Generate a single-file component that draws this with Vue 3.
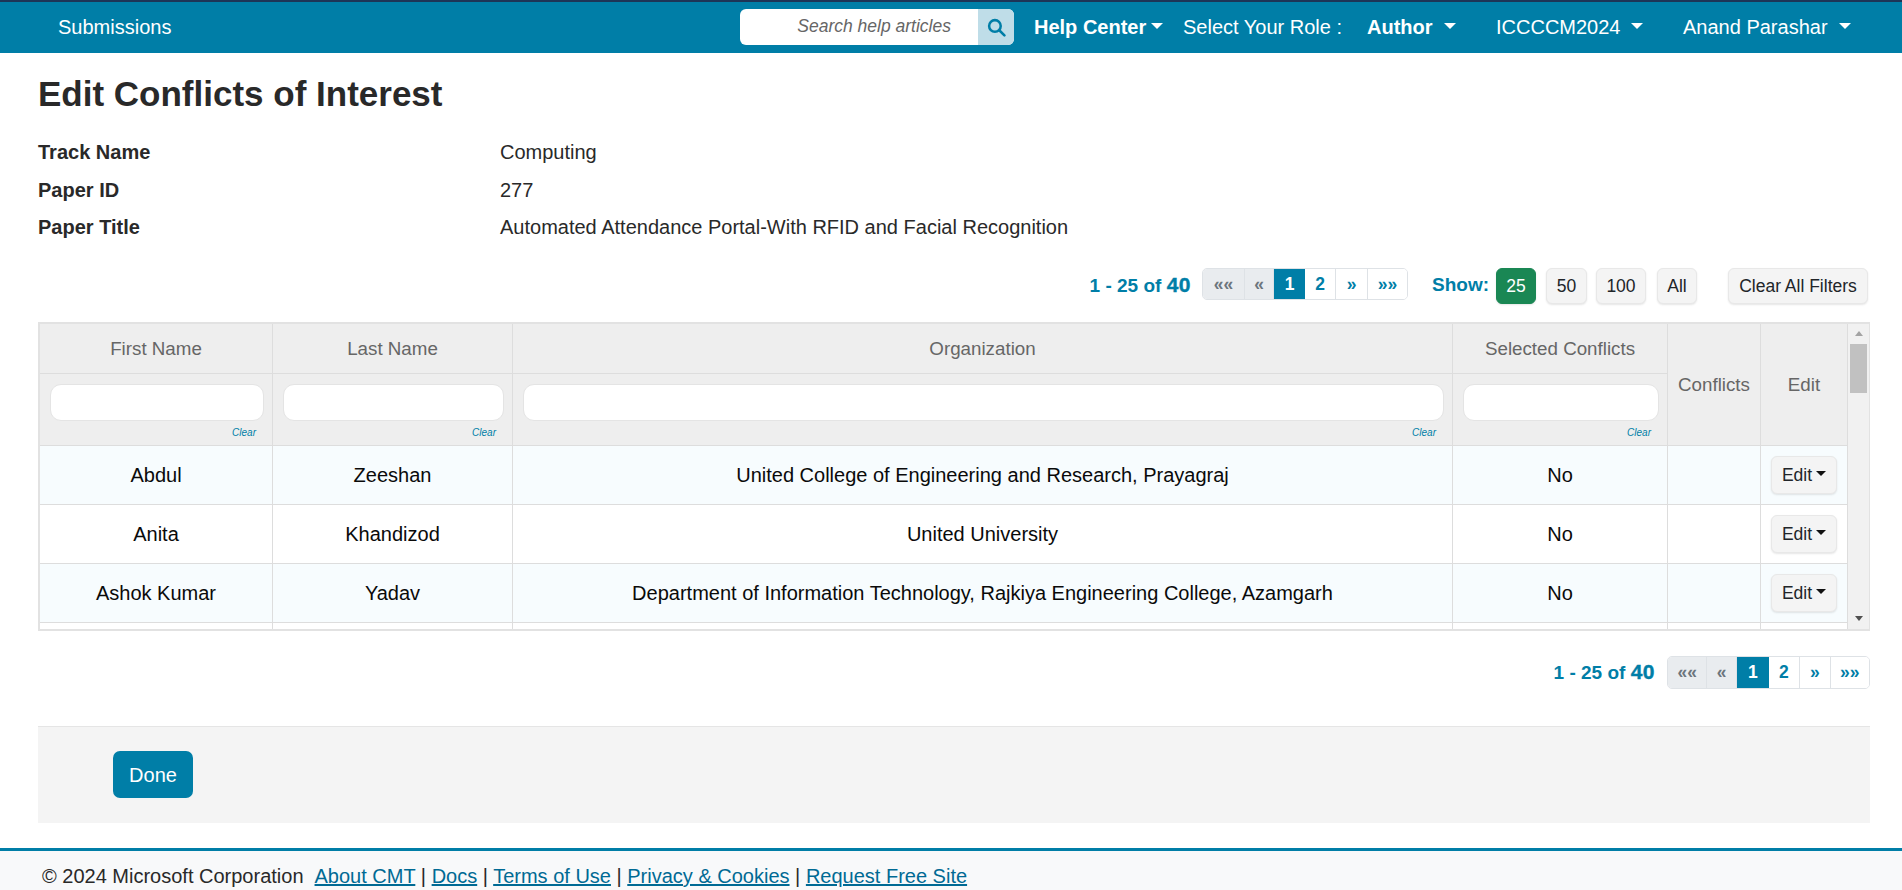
<script setup>
const rows = [
  { first: 'Abdul', last: 'Zeeshan', org: 'United College of Engineering and Research, Prayagraj', sel: 'No' },
  { first: 'Anita', last: 'Khandizod', org: 'United University', sel: 'No' },
  { first: 'Ashok Kumar', last: 'Yadav', org: 'Department of Information Technology, Rajkiya Engineering College, Azamgarh', sel: 'No' }
]
const pages = [
  { t: '««', c: 'off w1' }, { t: '«', c: 'off w2' }, { t: '1', c: 'cur w3' },
  { t: '2', c: 'w3' }, { t: '»', c: 'w4' }, { t: '»»', c: 'w5' }
]
const links = ['About CMT', 'Docs', 'Terms of Use', 'Privacy & Cookies', 'Request Free Site']
const info = [
  ['Track Name', 'Computing'],
  ['Paper ID', '277'],
  ['Paper Title', 'Automated Attendance Portal-With RFID and Facial Recognition']
]
</script>

<template>
  <div class="page">
    <header class="nav">
      <a class="nav-sub">Submissions</a>
      <div class="search">
        <span class="search-text">Search help articles</span>
        <span class="search-btn">
          <svg width="19" height="19" viewBox="0 0 18 18" fill="none" stroke="#007ea7" stroke-width="2.4">
            <circle cx="7.5" cy="7.5" r="5.5" />
            <path d="M11.6 11.6 L16.5 16.5" stroke-linecap="round" />
          </svg>
        </span>
      </div>
      <a class="nav-item bold help">Help Center<i class="caret"></i></a>
      <span class="nav-item role">Select Your Role :</span>
      <a class="nav-item bold author">Author<i class="caret wide"></i></a>
      <a class="nav-item conf">ICCCCM2024<i class="caret wide"></i></a>
      <a class="nav-item user">Anand Parashar<i class="caret wide"></i></a>
    </header>

    <main class="main">
      <h1 class="title">Edit Conflicts of Interest</h1>
      <dl class="info">
        <div v-for="i in info" :key="i[0]" class="info-row">
          <dt>{{ i[0] }}</dt>
          <dd>{{ i[1] }}</dd>
        </div>
      </dl>

      <div class="toolbar">
        <span class="count">1 - 25 of <b>40</b></span>
        <div class="pager">
          <span v-for="p in pages" :key="p.t" class="pg" :class="p.c">{{ p.t }}</span>
        </div>
        <span class="show">Show:</span>
        <button class="btn green">25</button>
        <button class="btn b50">50</button>
        <button class="btn b100">100</button>
        <button class="btn ball">All</button>
        <button class="btn clear">Clear All Filters</button>
      </div>

      <div class="grid">
        <div class="grid-body">
          <table>
            <colgroup>
              <col class="c1" /><col class="c2" /><col class="c3" /><col class="c4" /><col class="c5" /><col class="c6" />
            </colgroup>
            <thead>
              <tr class="head1">
                <th>First Name</th>
                <th>Last Name</th>
                <th>Organization</th>
                <th>Selected Conflicts</th>
                <th rowspan="2">Conflicts</th>
                <th rowspan="2">Edit</th>
              </tr>
              <tr class="head2">
                <th v-for="n in 4" :key="n" class="filter">
                  <input type="text" />
                  <a class="clr">Clear</a>
                </th>
              </tr>
            </thead>
            <tbody>
              <tr v-for="(r, i) in rows" :key="r.first" :class="{ tint: i % 2 === 0 }">
                <td>{{ r.first }}</td>
                <td>{{ r.last }}</td>
                <td>{{ r.org }}</td>
                <td>{{ r.sel }}</td>
                <td></td>
                <td><button class="btn edit">Edit<i class="caret dark"></i></button></td>
              </tr>
              <tr class="tail"><td></td><td></td><td></td><td></td><td></td><td></td></tr>
            </tbody>
          </table>
        </div>
        <div class="scroll">
          <i class="arrow up"></i>
          <div class="thumb"></div>
          <i class="arrow down"></i>
        </div>
      </div>

      <div class="bottom-pager">
        <span class="count">1 - 25 of <b>40</b></span>
        <div class="pager big">
          <span v-for="p in pages" :key="p.t" class="pg" :class="p.c">{{ p.t }}</span>
        </div>
      </div>

      <div class="actions">
        <button class="done">Done</button>
      </div>
    </main>

    <footer class="foot">
      <span class="copy">© 2024 Microsoft Corporation</span>
      <template v-for="(l, i) in links" :key="l">
        <span v-if="i" class="sep"> | </span><a class="flink">{{ l }}</a>
      </template>
    </footer>
  </div>
</template>

<style>
html, body { margin: 0; overflow: hidden; background: #fff; }
</style>

<style scoped>
.page {
  width: 1902px;
  height: 890px;
  overflow: hidden;
  display: flex;
  flex-direction: column;
  font-family: "Liberation Sans", Arial, sans-serif;
  font-size: 20px;
  color: #292929;
}
.nav {
  height: 51px;
  flex: none;
  display: flex;
  align-items: center;
  background: #007ea7;
  border-top: 2px solid #1d3557;
  color: #fff;
}
.nav-sub { margin-left: 58px; width: 682px; flex: none; margin-top: -1px; }
.search {
  flex: none;
  width: 274px;
  height: 36px;
  background: #fff;
  border-radius: 6px;
  display: flex;
  overflow: hidden;
  margin-top: -1px;
}
.search-text {
  flex: 1;
  font-style: italic;
  font-size: 17.5px;
  color: #666;
  line-height: 34px;
  text-align: right;
  padding-right: 27px;
}
.search-btn {
  width: 36px;
  background: #bfdde8;
  display: flex;
  align-items: center;
  justify-content: center;
}
.nav-item { flex: none; white-space: nowrap; display: flex; align-items: center; margin-top: -1px; }
.bold { font-weight: 700; }
.help { margin-left: 20px; width: 129px; }
.role { margin-left: 20px; width: 165px; }
.author { margin-left: 19px; width: 129px; }
.conf { width: 187px; }
.caret {
  display: inline-block;
  width: 0;
  height: 0;
  margin-left: 5px;
  border-left: 6px solid transparent;
  border-right: 6px solid transparent;
  border-top: 6px solid #fff;
  margin-top: -3px;
}
.caret.wide { margin-left: 11px; }
.caret.dark { border-top-color: #111; border-left-width: 5px; border-right-width: 5px; border-top-width: 5px; margin-left: 4px; margin-top: -3px; }

.main { padding: 0 32px 0 38px; flex: none; }
.title { margin: 20px 0 0; font-size: 35px; line-height: 42px; font-weight: 700; }
.info { margin: 19px 0 0; }
.info-row { display: flex; height: 37.5px; line-height: 37.5px; }
.info-row dt { width: 462px; font-weight: 700; }
.info-row dd { margin: 0; }

.toolbar { display: flex; align-items: flex-start; justify-content: flex-end; margin-top: 21.5px; height: 36px; padding-right: 2px; }
.count { color: #007ea7; font-weight: 700; font-size: 19px; line-height: 32px; white-space: nowrap; }
.toolbar .count { line-height: 34px; }
.count b { font-size: 21px; font-weight: 900; -webkit-text-stroke: 0.4px #007ea7; letter-spacing: 0.5px; }
.pager {
  display: flex;
  height: 32px;
  margin-left: 11px;
  border-radius: 5px;
  border: 1px solid #dee2e6;
  box-sizing: border-box;
  overflow: hidden;
  font-size: 17.5px;
}
.pg {
  box-sizing: border-box;
  display: flex;
  align-items: center;
  justify-content: center;
  color: #007ea7;
  background: #fff;
  border-right: 1px solid #dee2e6;
  font-weight: 700;
}
.toolbar .pg { padding-top: 1px; }
.pg:last-child { border-right: 0; }
.pg.off { background: #e9ecef; color: #6c757d; }
.pg.cur { background: #007ea7; color: #fff; border-right: 0; }
.w1 { width: 42px; } .w2 { width: 29px; } .w3 { width: 31px; } .w4 { width: 32px; } .w5 { width: 39px; }
.big.pager { margin-left: 12px; width: 203px; }
.big .w1 { width: 40px; } .big .w2 { width: 30px; } .big .w3 { width: 32px; } .big .w4 { width: 31px; } .big .w5 { width: 39px; }

.show { color: #007ea7; font-weight: 700; font-size: 19px; line-height: 33px; margin-left: 24px; }
.btn {
  font-family: inherit;
  font-size: 17.5px;
  height: 36px;
  box-sizing: border-box;
  border: 1px solid #e8e8e8;
  border-radius: 6px;
  background: #f4f4f4;
  color: #212529;
  box-shadow: 0 1px 2px rgba(0,0,0,.1);
  padding: 0;
  margin-left: 10px;
}
.green { background: #1a8754; border-color: #1a8754; color: #fff; width: 40px; margin-left: 7px; }
.b50 { width: 41px; }
.b100 { width: 50px; margin-left: 9px; }
.ball { width: 40px; margin-left: 11px; }
.clear { width: 140px; margin-left: 31px; }

.grid {
  margin-top: 18px;
  height: 309px;
  box-sizing: border-box;
  border: 2px solid #e2e2e2;
  border-right-width: 1px;
  display: flex;
}
.grid-body { width: 1808px; overflow: hidden; flex: none; }
table { border-collapse: separate; border-spacing: 0; table-layout: fixed; width: 1808px; }
.c1 { width: 233px; } .c2 { width: 240px; } .c3 { width: 940px; } .c4 { width: 215px; } .c5 { width: 93px; } .c6 { width: 87px; }
th {
  background: #eee;
  font-weight: 400;
  font-size: 18.75px;
  color: #666;
  border-right: 1px solid #ddd;
  border-bottom: 1px solid #ddd;
  padding: 0;
  vertical-align: middle;
}
.head1 th { height: 49px; box-sizing: content-box; }
.head2 th { height: 72px; }
.filter { text-align: right; padding: 10px 8px 0 10px; box-sizing: border-box; vertical-align: top; }
.filter input {
  display: block;
  width: 100%;
  height: 37px;
  box-sizing: border-box;
  border: 1px solid #e4e4e4;
  border-radius: 11px;
  background: #fff;
  outline: 0;
  padding: 0;
}
.clr {
  display: block;
  margin: 5px 8px 0 0;
  font-size: 10px;
  font-style: italic;
  line-height: 14px;
  color: #007ea7;
}
td {
  height: 58px;
  text-align: center;
  padding: 0;
  color: #0a0a0a;
  border-right: 1px solid #ddd;
  border-bottom: 1px solid #ddd;
  vertical-align: middle;
}
.tint td { background: #f7fcfe; }
.tail td { height: 20px; border-bottom: 0; }
.edit {
  width: 66px;
  height: 38px;
  margin: 0;
  display: inline-flex;
  align-items: center;
  justify-content: center;
}
.scroll {
  flex: 1;
  background: #f1f1f1;
  display: flex;
  flex-direction: column;
  align-items: center;
}
.thumb { width: 17px; height: 49px; background: #c1c1c1; margin-top: 8px; }
.arrow { width: 0; height: 0; border-left: 4.5px solid transparent; border-right: 4.5px solid transparent; }
.arrow.up { border-bottom: 5px solid #a3a3a3; margin-top: 7px; }
.arrow.down { border-top: 5px solid #505050; margin-top: auto; margin-bottom: 8px; }

.bottom-pager { display: flex; justify-content: flex-end; margin-top: 25px; height: 33px; }
.bottom-pager .pager { height: 33px; }
.actions {
  margin-top: 37px;
  height: 97px;
  box-sizing: border-box;
  background: #f4f4f4;
  border-top: 1px solid #e5e5e5;
  padding: 24px 0 0 75px;
}
.done {
  width: 80px;
  height: 47px;
  border: 0;
  border-radius: 7px;
  background: #007ea7;
  color: #fff;
  font-family: inherit;
  font-size: 20px;
  padding: 2px 0 0;
}
.foot {
  margin-top: 25px;
  flex: 1;
  background: #f8f9fa;
  border-top: 3px solid #007ea7;
  padding-left: 42px;
  line-height: 50px;
  white-space: pre;
  color: #292929;
}
.copy { margin-right: 11px; }
.flink { color: #006a94; text-decoration: underline; }
.sep { color: #292929; }
</style>
